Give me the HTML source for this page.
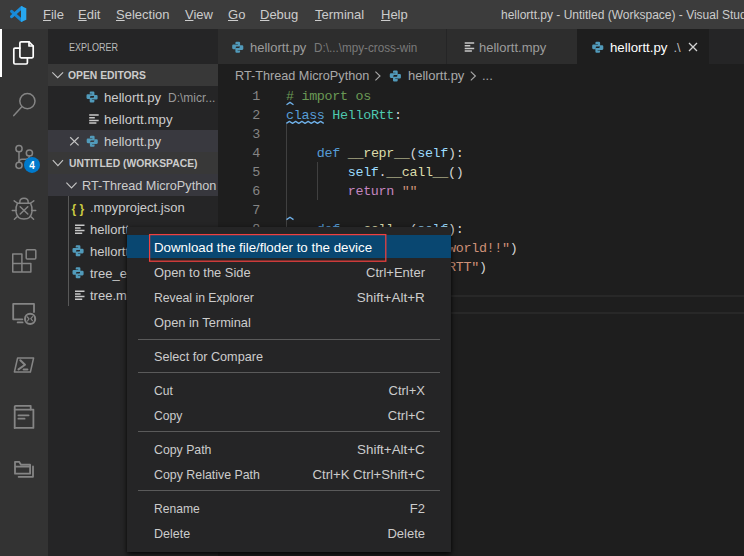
<!DOCTYPE html>
<html><head><meta charset="utf-8">
<style>
*{margin:0;padding:0;box-sizing:border-box}
html,body{width:744px;height:556px;overflow:hidden;background:#1e1e1e}
body{position:relative;font-family:"Liberation Sans",sans-serif;font-size:13px;color:#cccccc}
.a{position:absolute;white-space:nowrap;line-height:1}
svg{position:absolute;overflow:visible}
#title{position:absolute;left:0;top:0;width:744px;height:29px;background:#3c3c3c}
#act{position:absolute;left:0;top:29px;width:48px;height:527px;background:#333333}
#side{position:absolute;left:48px;top:29px;width:170px;height:527px;background:#252526;overflow:hidden}
#tabs{position:absolute;left:218px;top:29px;width:526px;height:35px;background:#252526}
.tab{position:absolute;top:0;height:35px;background:#2d2d2d}
.mono{font-family:"Liberation Mono",monospace;font-size:13.4px;letter-spacing:-0.32px}
.u{text-decoration:underline;text-underline-offset:1px;text-decoration-thickness:1px}
.hdr{position:absolute;left:0;width:170px;height:22px}
.menu{position:absolute;left:127px;top:227px;width:324px;height:325px;background:#252526;box-shadow:0 2px 5px rgba(0,0,0,0.95)}
.mi{position:absolute;left:27px;white-space:nowrap;line-height:1;color:#cccccc}
.ms{position:absolute;right:26px;white-space:nowrap;line-height:1;color:#cccccc;text-align:right}
.sep{position:absolute;left:11px;width:302px;height:1px;background:#5a5a5a}
.ln{position:absolute;width:30px;text-align:right;color:#858585;line-height:1}
.cl{position:absolute;left:286px;white-space:pre;line-height:1}
.kw{color:#569cd6}.fn{color:#dcdcaa}.cls{color:#4ec9b0}.cm{color:#6a9955}.st{color:#ce9178}.sf{color:#9cdcfe}.rt{color:#c586c0}.pn{color:#d4d4d4}
.sx{transform-origin:0 0}.sr{transform-origin:100% 0}
</style></head><body>

<!-- TITLE BAR -->
<div id="title">
  <svg style="left:0;top:0" width="40" height="29">
    <path d="M11.6 11.3 L21.6 20.3" stroke="#1585d3" stroke-width="3.1" stroke-linecap="round"/>
    <path d="M11.6 16.6 L21.6 7.6" stroke="#1a8ddb" stroke-width="3.1" stroke-linecap="round"/>
    <path d="M21 5.9 L26.3 8.3 V19.7 L21 22.1 Z" fill="#27a7ef"/>
  </svg>
  <div class="a" style="left:43px;top:8px"><span class="u">F</span>ile</div>
  <div class="a" style="left:78px;top:8px"><span class="u">E</span>dit</div>
  <div class="a" style="left:116px;top:8px"><span class="u">S</span>election</div>
  <div class="a" style="left:185px;top:8px"><span class="u">V</span>iew</div>
  <div class="a" style="left:228px;top:8px"><span class="u">G</span>o</div>
  <div class="a" style="left:260px;top:8px"><span class="u">D</span>ebug</div>
  <div class="a" style="left:315px;top:8px"><span class="u">T</span>erminal</div>
  <div class="a" style="left:381px;top:8px"><span class="u">H</span>elp</div>
  <div class="a" style="left:501px;top:9px;font-size:12px">hellortt.py - Untitled (Workspace) - Visual Studio Code</div>
</div>

<!-- ACTIVITY BAR -->
<div id="act">
  <div style="position:absolute;left:0;top:0;width:2px;height:48px;background:#ffffff"></div>
</div>
<svg style="left:0;top:0" width="48" height="556" fill="none" stroke-linecap="round" stroke-linejoin="round">
  <!-- explorer -->
  <g stroke="#ffffff" stroke-width="1.7">
    <path d="M21.2 41.8 H29 L33.2 46 V56.6 Q33.2 57.8 32 57.8 H21.2 Q19.9 57.8 19.9 56.6 V43 Q19.9 41.8 21.2 41.8 Z"/>
    <path d="M29 41.8 V46 H33.2"/>
    <path d="M19.9 48.1 H15 Q13.8 48.1 13.8 49.3 V62.8 Q13.8 64 15 64 H26.2 Q27.4 64 27.4 62.8 V57.8"/>
  </g>
  <g stroke="#858585" stroke-width="1.5">
    <!-- search -->
    <circle cx="27.4" cy="101.1" r="7.6"/>
    <path d="M21.8 106.8 L13.8 115.6"/>
    <!-- scm -->
    <circle cx="19" cy="148.7" r="3.1"/>
    <circle cx="29.4" cy="153" r="3.1"/>
    <circle cx="19" cy="165.3" r="3.1"/>
    <path d="M19 151.8 V162.2"/>
    <path d="M29.4 156.1 Q29.4 159.2 26 159.2 H22 Q19 159.2 19 162"/>
    <!-- debug -->
    <path d="M19.8 203.3 V202.2 Q19.8 198.3 24 198.3 Q28.2 198.3 28.2 202.2 V203.3"/>
    <path d="M17.4 203.3 H30.6 Q32.4 206.5 32 211.5 Q31.3 219 24 219 Q16.7 219 16 211.5 Q15.6 206.5 17.4 203.3 Z"/>
    <path d="M20.2 206.8 L27.8 214 M27.8 206.8 L20.2 214"/>
    <path d="M14.2 200.8 L17.2 203 M33.8 200.8 L30.8 203 M12.3 210.4 H16.4 M31.6 210.4 H35.7 M14.4 219.2 L17.6 216.3 M33.6 219.2 L30.4 216.3"/>
    <!-- extensions -->
    <path d="M12.75 254 H21.9 V263.5 H30.85 V272 H12.75 Z M12.75 263.5 H21.9 V272"/>
    <rect x="26.2" y="249.7" width="9.6" height="9.2" rx="1"/>
  </g>
  <g stroke="#858585" stroke-width="1.8">
    <!-- remote -->
    <path d="M22.4 319.3 H13.2 V303.9 H34 V312"/>
    <path d="M17.6 322.4 H22.6"/>
    <circle cx="30.1" cy="318.9" r="5.1" stroke-width="2"/>
    <path d="M27.4 317 L29 318.9 L27.4 321 M32.6 316.6 L30.8 318.7 L32.4 320.6" stroke-width="1.2"/>
    <!-- powershell -->
    <path d="M17.6 358 H33.6 L30.4 372 H14.4 Z" stroke-width="1.5"/>
    <path d="M20.3 360.3 L25 364.8 L18.5 369.4" stroke-width="2"/>
    <path d="M23.6 369.6 H27.4" stroke-width="2"/>
    <!-- book -->
    <path d="M14.7 427.9 V406.4 Q14.7 405.8 15.6 405.8 H30.7 V409.6"/>
    <path d="M14.7 409.6 H33.4 V427.9 H14.7"/>
    <path d="M18.4 415.3 H28.6 M18.4 418.7 H24.6"/>
    <!-- folder -->
    <path d="M15 461.8 H19.1 L21 464.7 H30.1 V473.7 H15 Z M15 466.7 H30.1"/>
    <path d="M33 466.4 V476.8 H18.6"/>
  </g>
  <circle cx="32" cy="164.9" r="8" fill="#007acc"/>
  <text x="32" y="168.6" fill="#ffffff" font-family="Liberation Sans" font-size="10" font-weight="bold" text-anchor="middle">4</text>
</svg>

<!-- SIDEBAR -->
<div id="side">
  <div class="a sx" style="left:20.6px;top:13px;font-size:11px;color:#bbbbbb;transform:scaleX(0.82)">EXPLORER</div>
  <div class="hdr" style="top:35px;background:#383838"></div>
  <div class="a sx" style="left:20px;top:41px;font-size:11px;font-weight:bold;color:#cccccc;transform:scaleX(0.94)">OPEN EDITORS</div>
  <div class="a sx" style="left:56px;top:62px;transform:scaleX(1.015)">hellortt.py</div>
  <div class="a" style="left:120px;top:63px;font-size:12px;color:#999999">D:\micr...</div>
  <div class="a sx" style="left:56px;top:84px;transform:scaleX(1.02)">hellortt.mpy</div>
  <div class="hdr" style="top:101px;height:22px;background:#39393f"></div><div class="hdr" style="top:123px;height:22px;background:#383838"></div><div class="hdr" style="top:145px;height:22px;background:#37373d"></div>
  <div class="a sx" style="left:56px;top:106px;transform:scaleX(1.015)">hellortt.py</div>
  <div class="a sx" style="left:20.6px;top:129px;font-size:11px;font-weight:bold;color:#cccccc;transform:scaleX(0.94)">UNTITLED (WORKSPACE)</div>
  <div class="a sx" style="left:34px;top:150px;transform:scaleX(0.975)">RT-Thread MicroPython</div>
  <div class="a" style="left:42px;top:172px">.mpyproject.json</div>
  <div class="a" style="left:42px;top:194px">hellortt.mpy</div>
  <div class="a" style="left:42px;top:216px">hellortt.py</div>
  <div class="a" style="left:42px;top:238px">tree_example.py</div>
  <div class="a" style="left:42px;top:260px">tree.mpy</div>
  <div style="position:absolute;left:20px;top:167px;width:1px;height:110px;background:#585858"></div>
</div>
<svg style="left:0;top:0" width="744" height="556" fill="none">
  <defs>
    <g id="py"><path fill="#519aba" d="M3.4 1.3 Q3.4 0.2 4.5 0.2 H7 Q8.1 0.2 8.1 1.3 V3.9 Q8.1 4.9 7.1 4.9 H4.6 Q3.8 4.9 3.8 5.7 V7.7 H1.3 Q0.2 7.7 0.2 6.6 V4.2 Q0.2 3.1 1.3 3.1 H5.9 V2.6 H3.4 Z"/><path fill="#519aba" transform="rotate(180 5.75 5.75)" d="M3.4 1.3 Q3.4 0.2 4.5 0.2 H7 Q8.1 0.2 8.1 1.3 V3.9 Q8.1 4.9 7.1 4.9 H4.6 Q3.8 4.9 3.8 5.7 V7.7 H1.3 Q0.2 7.7 0.2 6.6 V4.2 Q0.2 3.1 1.3 3.1 H5.9 V2.6 H3.4 Z"/></g>
    <g id="lines" stroke="#c8c8c8" stroke-width="1.5">
      <path d="M0 0.7 H9.5 M0 3.4 H5.6 M0 6.1 H9.5 M0 8.8 H7.2"/>
    </g>
  </defs>
  <!-- sidebar chevrons -->
  <path d="M52.3 72.3 L57.7 77.7 L63.1 72.3" stroke="#c5c5c5" stroke-width="1.1"/>
  <path d="M52.8 160.2 L57.9 165.6 L63 160.2" stroke="#c5c5c5" stroke-width="1.1"/>
  <path d="M66.4 182.6 L71.5 188 L76.6 182.6" stroke="#c5c5c5" stroke-width="1.1"/>
  <path d="M70.2 137.2 L78.6 145.4 M78.6 137.2 L70.2 145.4" stroke="#c5c5c5" stroke-width="1.2"/>
  <use href="#py" x="86.3" y="91.2"/>
  <use href="#lines" x="89.2" y="114.3"/>
  <use href="#py" x="86.5" y="135.5"/>
  <use href="#lines" x="75" y="224.5"/>
  <use href="#py" x="72.3" y="245"/>
  <use href="#py" x="72.3" y="267"/>
  <use href="#lines" x="75" y="290.5"/>
  <text x="71.6" y="212.6" fill="#cbcb41" font-family="Liberation Sans" font-size="12" font-weight="bold">{ }</text>
</svg>

<!-- TABS -->
<div id="tabs">
  <div class="tab" style="left:0;width:228px">
    <div class="a" style="left:32px;top:12px;color:#9c9c9c">hellortt.py</div>
    <div class="a" style="left:96px;top:13px;font-size:12px;color:#7a7a7a;transform:scaleX(0.975);transform-origin:0 0">D:\...\mpy-cross-win</div>
  </div>
  <div class="tab" style="left:229px;width:130px">
    <div class="a" style="left:32px;top:12px;color:#9c9c9c">hellortt.mpy</div>
  </div>
  <div class="tab" style="left:359px;width:132px;background:#1e1e1e">
    <div class="a sx" style="left:32.5px;top:12px;color:#ffffff;transform:scaleX(1.02)">hellortt.py</div>
    <div class="a" style="left:96.5px;top:12px;font-size:13px;color:#bbbbbb">.\</div>
  </div>
</div>
<svg style="left:0;top:0" width="744" height="556" fill="none">
  <use href="#py" x="232" y="41.5"/>
  <use href="#lines" x="464.7" y="42.3"/>
  <use href="#py" x="592" y="41.5"/>
  <path d="M689 43 L697 51 M697 43 L689 51" stroke="#d4d4d4" stroke-width="1.3"/>
  <!-- breadcrumb chevrons + icon -->
  <path d="M375.4 71.6 L380 76 L375.4 80.4" stroke="#a9a9a9" stroke-width="1.1"/>
  <path d="M470.8 71.6 L475.4 76 L470.8 80.4" stroke="#a9a9a9" stroke-width="1.1"/>
  <use href="#py" x="389.6" y="70.2"/>
</svg>

<!-- BREADCRUMB -->
<div class="a sx" style="left:234.5px;top:69px;color:#a9a9a9;transform:scaleX(0.975)">RT-Thread MicroPython</div>
<div class="a" style="left:408px;top:69px;color:#a9a9a9">hellortt.py</div>
<div class="a" style="left:482px;top:69px;color:#a9a9a9">...</div>

<!-- EDITOR -->
<div class="mono">
  <div class="ln" style="left:230px;top:90px">1</div>
  <div class="ln" style="left:230px;top:109px">2</div>
  <div class="ln" style="left:230px;top:128px">3</div>
  <div class="ln" style="left:230px;top:147px">4</div>
  <div class="ln" style="left:230px;top:166px">5</div>
  <div class="ln" style="left:230px;top:185px">6</div>
  <div class="ln" style="left:230px;top:204px">7</div>
  <div class="ln" style="left:230px;top:223px">8</div>
  <div class="cl cm" style="top:90px"># import os</div>
  <div class="cl" style="top:109px"><span class="kw">class</span> <span class="cls">HelloRtt</span><span class="pn">:</span></div>
  <div class="cl" style="top:147px"><span class="kw">    def</span> <span class="fn">__repr__</span><span class="pn">(</span><span class="sf">self</span><span class="pn">):</span></div>
  <div class="cl" style="top:166px"><span class="sf">        self</span><span class="pn">.</span><span class="fn">__call__</span><span class="pn">()</span></div>
  <div class="cl" style="top:185px"><span class="rt">        return</span> <span class="st">""</span></div>
  <div class="cl" style="top:223px"><span class="kw">    def</span> <span class="fn">__call__</span><span class="pn">(</span><span class="sf">self</span><span class="pn">):</span></div>
  <div class="cl" style="top:242px"><span class="fn">        print</span><span class="pn">(</span><span class="st">"hello world!!"</span><span class="pn">)</span></div>
  <div class="cl" style="top:261px"><span class="fn">        print</span><span class="pn">(</span><span class="st">"hello RTT"</span><span class="pn">)</span></div>
</div>
<svg style="left:0;top:0" width="744" height="556" fill="none" stroke="#6fb0e8" stroke-width="1">
  <!-- indent guides -->
  <path d="M286.5 124 V314 M317.5 162 V200" stroke="#404040"/>
  <!-- squiggles -->
  <path d="M286.5 104.8 L290 102.4 L293.5 104.8" stroke-width="1.3"/>
  <path d="M286.3 123.4 l3.12 -2 l3.12 2 l3.12 -2 l3.12 2 l3.12 -2 l3.12 2 l3.12 -2 l3.12 2 l3.12 -2 l3.12 2 l3.12 -2 l3.12 2" stroke-width="1.25" stroke-linejoin="round"/>
  <path d="M286.5 219.6 L290 217.2 L293.5 219.6" stroke-width="1.3"/>
</svg>
<div style="position:absolute;left:218px;top:295px;width:526px;height:19px;border-top:2px solid #282828;border-bottom:2px solid #282828"></div>

<!-- CONTEXT MENU -->
<div class="menu">
  <div style="position:absolute;left:0;top:8px;width:324px;height:23px;background:#094771"></div>
  <svg style="left:0;top:0" width="324" height="60"><rect x="22.6" y="7.6" width="236.2" height="26.6" fill="none" stroke="#f0403f" stroke-width="1.25"/></svg>
  <div class="mi sx" style="top:14px;color:#ffffff;transform:scaleX(1.023)">Download the file/floder to the device</div>
  <div class="mi sx" style="top:39px;transform:scaleX(0.99)">Open to the Side</div><div class="ms" style="top:39px">Ctrl+Enter</div>
  <div class="mi sx" style="top:64px;transform:scaleX(0.94)">Reveal in Explorer</div><div class="ms sr" style="top:64px;transform:scaleX(1.035)">Shift+Alt+R</div>
  <div class="mi sx" style="top:89px;transform:scaleX(0.988)">Open in Terminal</div>
  <div class="sep" style="top:112px"></div>
  <div class="mi sx" style="top:123px;transform:scaleX(0.973)">Select for Compare</div>
  <div class="sep" style="top:145px"></div>
  <div class="mi sx" style="top:157px;transform:scaleX(0.93)">Cut</div><div class="ms" style="top:157px">Ctrl+X</div>
  <div class="mi sx" style="top:182px;transform:scaleX(0.935)">Copy</div><div class="ms" style="top:182px">Ctrl+C</div>
  <div class="sep" style="top:204px"></div>
  <div class="mi sx" style="top:216px;transform:scaleX(0.946)">Copy Path</div><div class="ms sr" style="top:216px;transform:scaleX(1.03)">Shift+Alt+C</div>
  <div class="mi sx" style="top:241px;transform:scaleX(0.952)">Copy Relative Path</div><div class="ms sr" style="top:241px;transform:scaleX(1.014)">Ctrl+K Ctrl+Shift+C</div>
  <div class="sep" style="top:263px"></div>
  <div class="mi sx" style="top:275px;transform:scaleX(0.93)">Rename</div><div class="ms" style="top:275px">F2</div>
  <div class="mi sx" style="top:300px;transform:scaleX(0.96)">Delete</div><div class="ms" style="top:300px">Delete</div>
</div>
</body></html>
